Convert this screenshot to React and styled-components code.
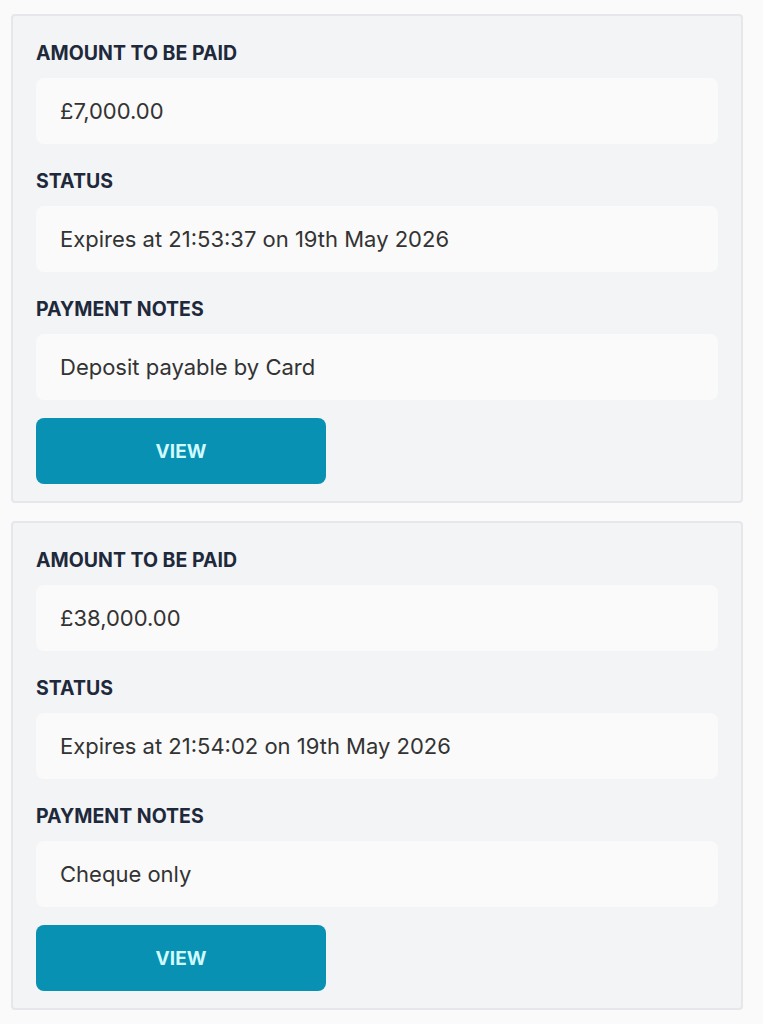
import React from 'react';
import styled, { createGlobalStyle } from 'styled-components';

const GlobalStyle = createGlobalStyle`
  body {
    margin: 0;
    background: #fafafa;
    font-family: Inter, "Noto Sans", sans-serif;
  }
`;

const List = styled.div`
  display: flex;
  flex-direction: column;
  gap: 18px;
  padding: 14px 20px 14px 11px;
`;

const Card = styled.div`
  background: #f3f4f6;
  border: 2px solid #e5e7eb;
  border-radius: 4px;
  padding: 23px 23px 17px 23px;
  display: flex;
  flex-direction: column;
`;

const Label = styled.div`
  font-size: 19.5px;
  font-weight: 700;
  line-height: 28px;
  color: #1e293b;
  margin-bottom: 11px;
`;

const Value = styled.div`
  background: #fafafa;
  border-radius: 8px;
  height: 66px;
  padding: 0 24px;
  display: flex;
  align-items: center;
  font-size: 22px;
  color: #333;
  margin-bottom: ${(p) => (p.$last ? '18px' : '23px')};
`;

const Button = styled.button`
  width: 290px;
  height: 66px;
  border: none;
  border-radius: 8px;
  background: #0891b2;
  color: #cffafe;
  font-family: inherit;
  font-size: 19px;
  font-weight: 700;
  cursor: pointer;
`;

const payments = [
  { amount: '£7,000.00', status: 'Expires at 21:53:37 on 19th May 2026', notes: 'Deposit payable by Card' },
  { amount: '£38,000.00', status: 'Expires at 21:54:02 on 19th May 2026', notes: 'Cheque only' },
];

const PaymentCard = ({ amount, status, notes }) => (
  <Card>
    <Label>AMOUNT TO BE PAID</Label>
    <Value>{amount}</Value>
    <Label>STATUS</Label>
    <Value>{status}</Value>
    <Label>PAYMENT NOTES</Label>
    <Value $last>{notes}</Value>
    <Button>VIEW</Button>
  </Card>
);

const App = () => (
  <>
    <GlobalStyle />
    <List>
      {payments.map((p, i) => (
        <PaymentCard key={i} {...p} />
      ))}
    </List>
  </>
);

export default App;
